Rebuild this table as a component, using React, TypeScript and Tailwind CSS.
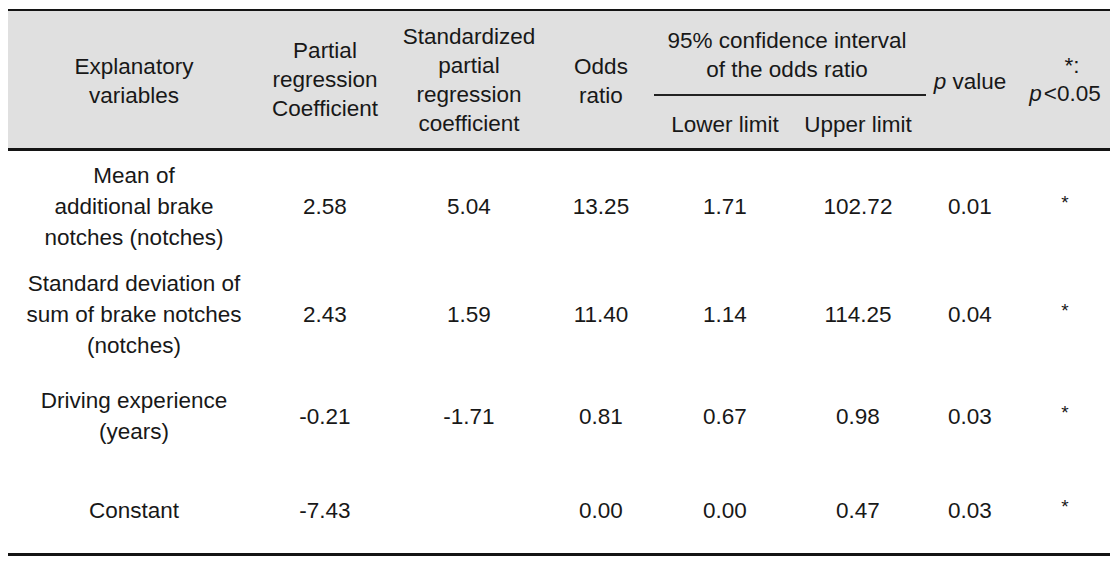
import React from "react"

interface Row {
  label: string[]
  values: string[]
  height: string
}

const rows: Row[] = [
  {
    label: ["Mean of", "additional brake", "notches (notches)"],
    values: ["2.58", "5.04", "13.25", "1.71", "102.72", "0.01"],
    height: "h-[110px]",
  },
  {
    label: ["Standard deviation of", "sum of brake notches", "(notches)"],
    values: ["2.43", "1.59", "11.40", "1.14", "114.25", "0.04"],
    height: "h-[106px]",
  },
  {
    label: ["Driving experience", "(years)"],
    values: ["-0.21", "-1.71", "0.81", "0.67", "0.98", "0.03"],
    height: "h-[98px]",
  },
  {
    label: ["Constant"],
    values: ["-7.43", "", "0.00", "0.00", "0.47", "0.03"],
    height: "h-[88px] pt-[3px]",
  },
]

const cols = "grid grid-cols-[252px_130px_158px_106px_142px_124px_100px_90px]"

function Lines({ lines }: { lines: string[] }) {
  return (
    <div className="flex flex-col items-center">
      {lines.map((l) => (
        <span key={l} className="whitespace-nowrap">
          {l}
        </span>
      ))}
    </div>
  )
}

export default function App() {
  return (
    <div className="min-h-screen bg-white pt-[9px] pl-[8px] text-[#181818] font-['Liberation_Sans',Arial,sans-serif] text-[22.5px]">
      <div className="w-[1102px]">
        {/* Header */}
        <div className={`${cols} h-[142px] bg-[#e0e0e0] border-t-2 border-b-[3px] border-[#141414] leading-[29px] text-center`}>
          <div className="flex items-center justify-center pt-[2px]">
            <Lines lines={["Explanatory", "variables"]} />
          </div>
          <div className="flex items-center justify-center">
            <Lines lines={["Partial", "regression", "Coefficient"]} />
          </div>
          <div className="flex items-center justify-center">
            <Lines lines={["Standardized", "partial", "regression", "coefficient"]} />
          </div>
          <div className="flex items-center justify-center pt-[2px]">
            <Lines lines={["Odds", "ratio"]} />
          </div>
          <div className="col-span-2 flex flex-col pt-[15px]">
            <Lines lines={["95% confidence interval", "of the odds ratio"]} />
            <div className="mt-[10px] mr-[-6px] h-[2px] bg-[#222]" />
            <div className="grid grid-cols-[142px_124px] pt-[14px]">
              <span>Lower limit</span>
              <span>Upper limit</span>
            </div>
          </div>
          <div className="flex items-center justify-center pt-[3px]">
            <span className="whitespace-nowrap">
              <i>p</i> value
            </span>
          </div>
          <div className="flex items-center justify-center">
            <div className="flex flex-col items-center leading-[28px]">
              <span className="pl-[14px]">*:</span>
              <span className="whitespace-nowrap">
                <i>p</i>
                <span className="ml-[2px]">&lt;0.05</span>
              </span>
            </div>
          </div>
        </div>

        {/* Body */}
        <div className="border-b-[3px] border-[#141414] leading-[31px] text-center">
          {rows.map((row) => (
            <div key={row.label[0]} className={`${cols} ${row.height} items-center`}>
              <Lines lines={row.label} />
              {row.values.map((v, i) => (
                <span key={i}>{v}</span>
              ))}
              <span className="text-[19px] -translate-y-[4px]">*</span>
            </div>
          ))}
        </div>
      </div>
    </div>
  )
}
